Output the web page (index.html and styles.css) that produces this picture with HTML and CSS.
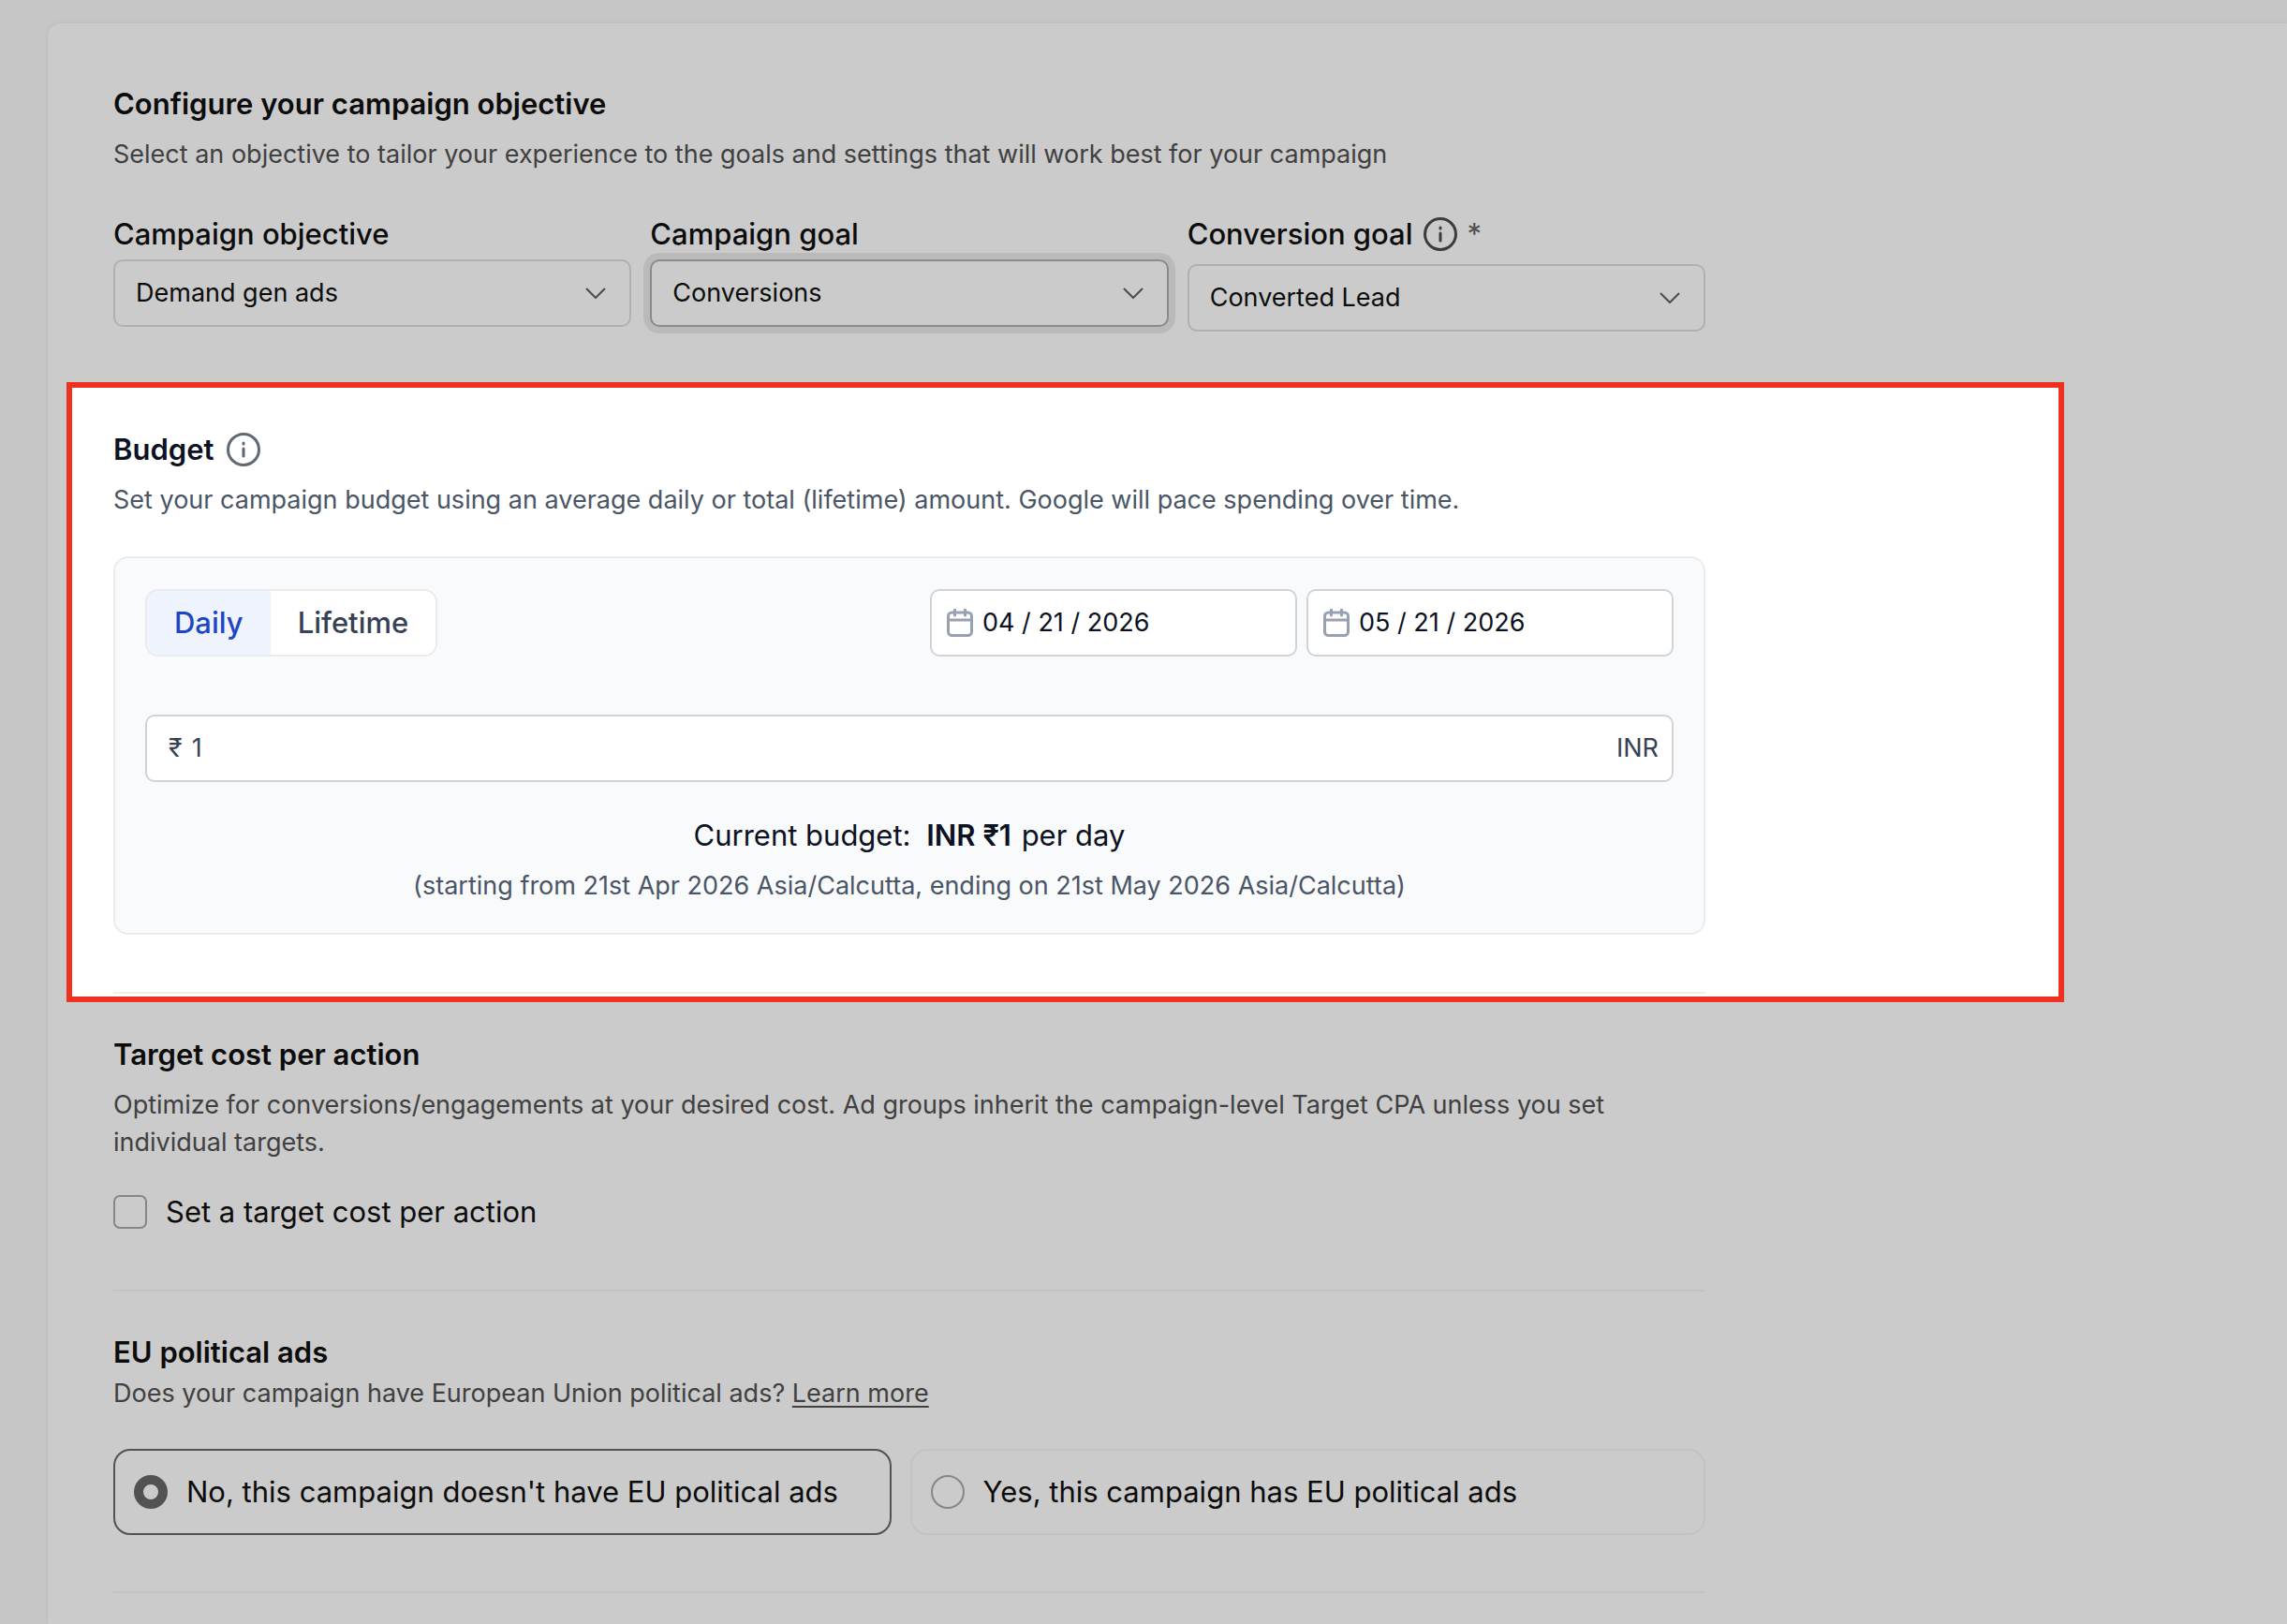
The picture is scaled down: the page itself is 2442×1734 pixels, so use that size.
FILE: index.html
```html
<!DOCTYPE html>
<html lang="en">
<head>
  <meta charset="UTF-8" />
  <meta name="viewport" content="width=device-width, initial-scale=1.0"/>
  <title>Campaign settings</title>
  <link rel="stylesheet" href="styles.css">
</head>
<body>

  <main class="card">

    <section class="section objective">
      <div class="inner">
        <h2>Configure your campaign objective</h2>
        <p class="desc">Select an objective to tailor your experience to the goals and settings that will work best for your campaign</p>

        <div class="fields">
          <div class="field">
            <label class="field-label" for="objective">Campaign objective</label>
            <div class="select">
              <select id="objective"><option>Demand gen ads</option></select>
              <svg class="chevron" viewBox="0 0 22 12"><path d="M1 1l10 10L21 1"/></svg>
            </div>
          </div>
          <div class="field">
            <label class="field-label" for="goal">Campaign goal</label>
            <div class="select focused">
              <select id="goal"><option>Conversions</option></select>
              <svg class="chevron" viewBox="0 0 22 12"><path d="M1 1l10 10L21 1"/></svg>
            </div>
          </div>
          <div class="field">
            <div class="label-row">
              <label class="field-label" for="conversion">Conversion goal</label>
              <svg class="info" viewBox="0 0 36 36"><circle cx="18" cy="18" r="16.5"/><path d="M18 17v8"/><path d="M18 11v1"/></svg>
              <span class="required">*</span>
            </div>
            <div class="select">
              <select id="conversion"><option>Converted Lead</option></select>
              <svg class="chevron" viewBox="0 0 22 12"><path d="M1 1l10 10L21 1"/></svg>
            </div>
          </div>
        </div>
      </div>
    </section>

    <section class="spotlight">
      <div class="inner">
        <div class="title-row">
          <h2>Budget</h2>
          <svg class="info" viewBox="0 0 36 36"><circle cx="18" cy="18" r="16.5"/><path d="M18 17v8"/><path d="M18 11v1"/></svg>
        </div>
        <p class="desc">Set your campaign budget using an average daily or total (lifetime) amount. Google will pace spending over time.</p>

        <div class="panel">
          <div class="panel-top">
            <div class="toggle">
              <button type="button" class="active">Daily</button>
              <button type="button">Lifetime</button>
            </div>
            <div class="dates">
              <label class="box date">
                <svg class="calendar" viewBox="0 0 28 30"><rect x="1.5" y="4" width="25" height="24.5" rx="4"/><path d="M1.5 12h25M8.5 1v6M19.5 1v6"/></svg>
                <input type="text" value="04 / 21 / 2026" aria-label="Start date">
              </label>
              <label class="box date">
                <svg class="calendar" viewBox="0 0 28 30"><rect x="1.5" y="4" width="25" height="24.5" rx="4"/><path d="M1.5 12h25M8.5 1v6M19.5 1v6"/></svg>
                <input type="text" value="05 / 21 / 2026" aria-label="End date">
              </label>
            </div>
          </div>

          <label class="box amount">
            <span>₹</span>
            <input type="text" value="1" aria-label="Budget amount">
            <span>INR</span>
          </label>

          <p class="current">Current budget: <strong>INR ₹1</strong> per day</p>
          <p class="period">(starting from 21st Apr 2026 Asia/Calcutta, ending on 21st May 2026 Asia/Calcutta)</p>
        </div>
        <hr>
      </div>
    </section>

    <section class="section target">
      <div class="inner">
        <h2>Target cost per action</h2>
        <p class="desc">Optimize for conversions/engagements at your desired cost. Ad groups inherit the campaign-level Target CPA unless you set individual targets.</p>
        <label class="check">
          <input type="checkbox">
          <span>Set a target cost per action</span>
        </label>
        <hr>
      </div>
    </section>

    <section class="section political">
      <div class="inner">
        <h2>EU political ads</h2>
        <p class="desc">Does your campaign have European Union political ads? <a href="#">Learn more</a></p>
        <div class="options">
          <label class="option selected">
            <input type="radio" name="eu" checked>
            <span>No, this campaign doesn't have EU political ads</span>
          </label>
          <label class="option">
            <input type="radio" name="eu">
            <span>Yes, this campaign has EU political ads</span>
          </label>
        </div>
        <hr>
      </div>
    </section>

  </main>

</body>
</html>
```

FILE: styles.css
```css
* {
  margin: 0;
  padding: 0;
  box-sizing: border-box;
}

body {
  min-height: 100vh;
  padding: 25px 0 0 51px;
  background: #c6c6c6;
  color: #0c0c0c;
  font-family: Inter, "Liberation Sans", sans-serif;
  font-size: 27px;
  line-height: 40px;
}

input, select, button {
  font: inherit;
  color: inherit;
}

.card {
  min-height: calc(100vh - 25px);
  background: #cbcbcb;
  border-radius: 14px 0 0 0;
  box-shadow: 0 0 4px 1px #bebebe;
}

.section {
  padding: 0 70px;
}

.inner {
  max-width: 1700px;
}

h2 {
  font-size: 31px;
  font-weight: 600;
  line-height: 42px;
}

.desc {
  margin-top: 13px;
  color: #404040;
}

hr {
  height: 2px;
  border: none;
  background: #c3c3c3;
}

.info {
  width: 36px;
  height: 36px;
  fill: none;
  stroke: #3c3c3c;
  stroke-width: 3;
  stroke-linecap: round;
}

/* objective */

.objective {
  padding-top: 65px;
  padding-bottom: 54px;
}

.fields {
  display: grid;
  grid-template-columns: repeat(3, 1fr);
  align-items: start;
  gap: 20px;
  margin-top: 44px;
}

.field-label {
  display: block;
  font-size: 31px;
  font-weight: 500;
  line-height: 42px;
}

.label-row {
  display: flex;
  align-items: center;
  gap: 11px;
  padding-bottom: 5px;
}

.required {
  color: #505050;
  font-size: 31px;
}

.select {
  display: grid;
  align-items: center;
  margin-top: 6px;
}

.select select,
.select .chevron {
  grid-area: 1 / 1;
}

.select select {
  appearance: none;
  height: 72px;
  padding: 0 60px 0 22px;
  background: #cbcbcb;
  border: 2px solid #b0b0b0;
  border-radius: 10px;
}

.select.focused select {
  border-color: #8a8a8a;
  box-shadow: 0 0 0 7px #bababa;
}

.chevron {
  justify-self: end;
  width: 22px;
  height: 12px;
  margin-right: 27px;
  fill: none;
  stroke: #4c4c4c;
  stroke-width: 2;
  pointer-events: none;
}

/* budget */

.spotlight {
  margin: 0 238px 0 20px;
  padding: 45px 44px 3px;
  background: #fff;
  border: 6px solid #f03020;
  color: #0c1222;
}

.spotlight .desc {
  color: #4a5565;
}

.spotlight .info {
  stroke: #5d6a73;
}

.spotlight hr {
  margin-top: 61px;
  background: #eeeeec;
}

.title-row {
  display: flex;
  align-items: center;
  gap: 14px;
}

.panel {
  margin-top: 40px;
  padding: 33px 32px 30px;
  background: #f9fafc;
  border: 2px solid #e9ebed;
  border-radius: 16px;
}

.panel-top {
  display: flex;
  justify-content: space-between;
  margin-bottom: 62px;
}

.toggle {
  display: flex;
  height: 72px;
  overflow: hidden;
  background: #fff;
  border: 2px solid #e9ebed;
  border-radius: 14px;
}

.toggle button {
  padding: 0 29px;
  background: #fff;
  border: none;
  color: #364153;
  font-size: 31px;
  font-weight: 500;
}

.toggle .active {
  background: #eef3fe;
  color: #1d45c4;
}

.dates {
  display: flex;
  gap: 10px;
}

.box {
  display: flex;
  align-items: center;
  height: 72px;
  background: #fff;
  border: 2px solid #d0d4d8;
  border-radius: 10px;
}

.box input {
  flex: 1;
  min-width: 0;
  background: none;
  border: none;
  outline: none;
}

.date {
  width: 392px;
  padding: 0 16px;
  gap: 10px;
}

.calendar {
  width: 28px;
  height: 30px;
  fill: none;
  stroke: #98a1b2;
  stroke-width: 3;
  stroke-linecap: round;
}

.amount {
  gap: 10px;
  padding: 0 14px 0 23px;
  color: #364153;
}

.current {
  margin-top: 36px;
  font-size: 31px;
  line-height: 42px;
  text-align: center;
}

.current strong {
  margin: 0 2px 0 8px;
  font-weight: 600;
}

.period {
  margin-top: 13px;
  color: #4a5565;
  text-align: center;
}

/* target cost */

.target {
  padding-top: 35px;
}

.check {
  display: flex;
  align-items: center;
  gap: 20px;
  margin: 34px 0 63px;
  font-size: 31px;
}

.check input,
.option input {
  appearance: none;
  flex: none;
  width: 36px;
  height: 36px;
  border: 2px solid #868686;
}

.check input {
  border-radius: 7px;
}

/* political ads */

.political {
  padding-top: 44px;
}

.political .desc {
  margin-top: 3px;
}

.political a {
  color: inherit;
  text-underline-offset: 4px;
}

.options {
  display: grid;
  grid-template-columns: 44fr 45fr;
  gap: 20px;
  margin: 39px 0 60px;
}

.option {
  display: flex;
  align-items: center;
  gap: 20px;
  padding: 24px 20px;
  border: 2px solid #c3c3c3;
  border-radius: 18px;
  font-size: 31px;
}

.option.selected {
  border-color: #525252;
}

.option input {
  border-radius: 50%;
}

.option input:checked {
  border: 10px solid #525252;
}
```
